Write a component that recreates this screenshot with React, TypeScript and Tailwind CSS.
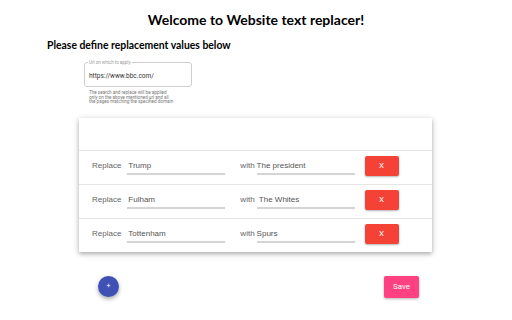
import React from "react";

interface Rule {
  from: string;
  to: string;
}

const rules: Rule[] = [
  { from: "Trump", to: "The president" },
  { from: "Fulham", to: "\u00a0The Whites" },
  { from: "Tottenham", to: "Spurs" },
];

function RuleRow({ rule }: { rule: Rule }) {
  return (
    <div className="h-[34px] border-t border-[#e6e6e6] flex items-start font-['Liberation_Sans',sans-serif]">
      <span className="ml-[13px] mt-[10px] text-[8px] leading-[10px] text-[#666]">Replace</span>
      <div className="ml-[6px] w-[98px] mt-[10px]">
        <div className="h-[10px] pl-[1px] text-[8px] leading-[10px] text-[#555] whitespace-pre">{rule.from}</div>
        <div className="mt-[2px] h-[2px] bg-[#d4d4d4]" />
      </div>
      <span className="ml-[15px] mt-[10px] text-[8px] leading-[10px] text-[#666]">with</span>
      <div className="ml-[2px] w-[98px] mt-[10px]">
        <div className="h-[10px] text-[8px] leading-[10px] text-[#555] whitespace-pre">{rule.to}</div>
        <div className="mt-[2px] h-[2px] bg-[#d4d4d4]" />
      </div>
      <button className="ml-[10px] mt-[5px] w-[34px] h-[20px] rounded-[2px] bg-[#f44336] text-white text-[8px] font-['Roboto',sans-serif] shadow-[0_1px_2px_rgba(0,0,0,0.3)]">
        X
      </button>
    </div>
  );
}

export default function App() {
  return (
    <div className="w-[512px] h-[320px] bg-white overflow-hidden font-['Roboto','Liberation_Sans',sans-serif]">
      <h1 className="pt-[11px] text-center text-[14px] leading-[18px] font-bold text-black font-['Lato',sans-serif]">
        Welcome to Website text replacer!
      </h1>
      <h2 className="mt-[9px] ml-[47px] text-[10.4px] leading-[14px] font-bold text-black font-['Lato',sans-serif]">
        Please define replacement values below
      </h2>

      {/* Url field */}
      <div className="relative mt-[10px] ml-[84px] w-[108px] h-[25px] border border-[#cfcfcf] rounded-[3px]">
        <span className="absolute -top-[3px] left-[3px] px-[1px] bg-white text-[4.5px] leading-[5px] text-[#9a9a9a]">
          Url on which to apply
        </span>
        <div className="pl-[4px] pt-[9px] text-[6.5px] leading-[8px] text-[#333]">https://www.bbc.com/</div>
      </div>
      <p className="mt-[4px] ml-[89px] w-[90px] text-[4.6px] leading-[4.6px] text-[#777]">
        The search and replace will be applied
        <br />
        only on the above mentioned url and all
        <br />
        the pages matching the specified domain
      </p>

      {/* Rules card */}
      <div className="mt-[13px] ml-[79px] w-[353px] bg-white shadow-[0_2px_4px_rgba(0,0,0,0.25),0_1px_8px_rgba(0,0,0,0.12)]">
        <div className="h-[32px]" />
        {rules.map((r, i) => (
          <RuleRow key={i} rule={r} />
        ))}
      </div>

      <div className="mt-[24px] flex items-center">
        <button className="ml-[98px] w-[21px] h-[21px] rounded-full bg-[#3f51b5] text-white text-[7px] leading-none shadow-[0_2px_4px_rgba(0,0,0,0.35)]">
          +
        </button>
        <button className="ml-[265px] w-[35px] h-[22px] rounded-[2px] bg-[#ff4081] text-white text-[8px] shadow-[0_1px_3px_rgba(0,0,0,0.3)]">
          Save
        </button>
      </div>
    </div>
  );
}
